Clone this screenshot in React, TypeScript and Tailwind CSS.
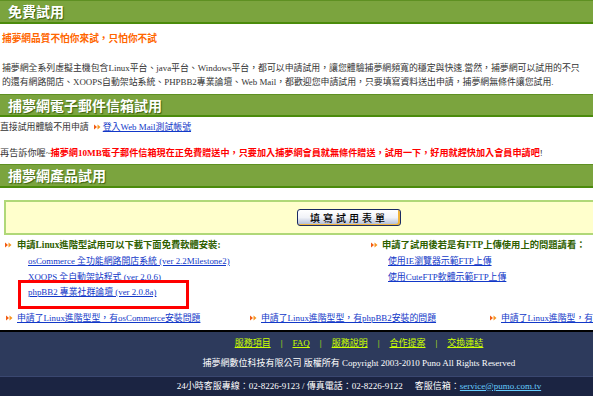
import React from "react";

const Arrow = () => (
  <svg width="7" height="6" viewBox="0 0 7 6" className="shrink-0">
    <polygon points="0,0.5 3,3 0,5.5" fill="#f25c13" />
    <polygon points="3.5,0.5 6.5,3 3.5,5.5" fill="#f7941d" />
  </svg>
);

const Bar = ({ children, h }: { children: React.ReactNode; h: string }) => (
  <div
    className={`${h} flex items-center pl-[8px] bg-[#7ba43e] border-t border-t-[#5e9022] border-b-2 border-b-[#4b8b0c] text-white text-[14px] font-bold font-['Noto_Sans_CJK_TC',sans-serif] [text-shadow:1px_1px_1px_#3b6410] whitespace-nowrap`}
  >
    {children}
  </div>
);

const Link = ({ children }: { children: React.ReactNode }) => (
  <span className="text-[#1238c8] underline">{children}</span>
);

export default function App() {
  return (
    <div className="relative w-[593px] h-[396px] overflow-hidden bg-white font-['Liberation_Serif','Noto_Sans_CJK_TC',serif] text-[#333]">
      <div className="w-[718px]">
        <div className="h-[330px]">
          <Bar h="h-[24px]">免費試用</Bar>
          <p className="mt-[9px] pl-[2px] text-[9.7px] leading-[12px] font-bold text-[#ff6600] whitespace-nowrap">
            捕夢網品質不怕你來試，只怕你不試
          </p>
          <div className="mt-[17px] pl-[2px] text-[8.9px] leading-[13.5px] whitespace-nowrap">
            <div>
              捕夢網全系列虛擬主機包含Linux平台、java平台、Windows平台，都可以申請試用，讓您體驗捕夢網頻寬的穩定與快速.當然，捕夢網可以試用的不只
            </div>
            <div>
              的還有網路開店、XOOPS自動架站系統、PHPBB2專業論壇、Web Mail，都歡迎您申請試用，只要填寫資料送出申請，捕夢網無條件讓您試用.
            </div>
          </div>
          <div className="mt-[5px]">
            <Bar h="h-[23px]">捕夢網電子郵件信箱試用</Bar>
          </div>
          <div className="mt-[4px] flex items-center text-[8.9px] leading-[12px] whitespace-nowrap">
            <span>直接試用體驗不用申請</span>
            <span className="ml-[5px] mr-[2px]">
              <Arrow />
            </span>
            <Link>登入Web Mail測試帳號</Link>
          </div>
          <div className="mt-[14px] text-[9.15px] leading-[12px] whitespace-nowrap">
            <span>再告訴你喔~</span>
            <span className="text-[#ff0000] font-bold">
              捕夢網10MB電子郵件信箱現在正免費贈送中，只要加入捕夢網會員就無條件贈送，試用一下，好用就趕快加入會員申請吧
            </span>
            <span>!</span>
          </div>
          <div className="mt-[5px]">
            <Bar h="h-[24px]">捕夢網產品試用</Bar>
          </div>
          <div className="mt-[12px] ml-[4px] w-[710px] h-[35px] border-2 border-[#b0d878] bg-[#ffffcc] flex items-center pl-[291px]">
            <div className="w-[104px] h-[17px] rounded-[3px] border border-[#1b2b63] bg-gradient-to-b from-white via-[#f1f3f8] to-[#aeb9d3] shadow-[inset_-2px_-1px_0_#f1b43a] flex items-center justify-center text-[10px] tracking-[3px] text-black font-['Noto_Sans_CJK_TC',sans-serif] font-medium">
              填寫試用表單
            </div>
          </div>
          <div className="mt-[4px] flex text-[8.9px]">
            <div className="w-[371px] pl-[5px]">
              <div className="flex items-center gap-[5px] leading-[12px] font-bold text-[#2f5f00] whitespace-nowrap text-[9.3px]">
                <Arrow />
                <span>申請Linux進階型試用可以下載下面免費軟體安裝:</span>
              </div>
              <div className="mt-[3px] pl-[23px] leading-[15.5px] whitespace-nowrap">
                <div>
                  <Link>osCommerce 全功能網路開店系統 (ver 2.2Milestone2)</Link>
                </div>
                <div>
                  <Link>XOOPS 全自動架站程式 (ver 2.0.6)</Link>
                </div>
                <div>
                  <Link>phpBB2 專業社群論壇 (ver 2.0.8a)</Link>
                </div>
              </div>
            </div>
            <div>
              <div className="flex items-center gap-[4px] leading-[12px] font-bold text-[#2f5f00] whitespace-nowrap text-[9.3px]">
                <Arrow />
                <span>申請了試用後若是有FTP上傳使用上的問題請看：</span>
              </div>
              <div className="mt-[3px] pl-[17px] leading-[15.5px] whitespace-nowrap">
                <div>
                  <Link>使用IE瀏覽器示範FTP上傳</Link>
                </div>
                <div>
                  <Link>使用CuteFTP軟體示範FTP上傳</Link>
                </div>
              </div>
            </div>
          </div>
          <div className="mt-[11px] flex text-[8.9px] leading-[13px] whitespace-nowrap">
            <div className="w-[250px] pl-[6px] flex items-center gap-[4px]">
              <Arrow />
              <Link>申請了Linux進階型型，有osCommerce安裝問題</Link>
            </div>
            <div className="w-[240px] flex items-center gap-[4px]">
              <Arrow />
              <Link>申請了Linux進階型型，有phpBB2安裝的問題</Link>
            </div>
            <div className="flex items-center gap-[4px]">
              <Arrow />
              <Link>申請了Linux進階型，有XOOPS安裝的問題</Link>
            </div>
          </div>
        </div>
        <div className="border-t-2 border-black bg-[#2d3a5c] h-[46px] pt-[5px] text-[9px] leading-[12px] whitespace-nowrap">
          <div className="flex justify-center items-center gap-[10px] text-[#ccff00]">
            <span className="underline">服務項目</span>
            <span>|</span>
            <span className="underline">FAQ</span>
            <span>|</span>
            <span className="underline">服務說明</span>
            <span>|</span>
            <span className="underline">合作提案</span>
            <span>|</span>
            <span className="underline">交換連結</span>
          </div>
          <div className="mt-[8px] text-center text-white">
            捕夢網數位科技有限公司 版權所有 Copyright 2003-2010 Puno All Rights Reserved
          </div>
        </div>
        <div className="h-[20px] bg-[#1b2442] border-t border-[#3a4770] flex justify-center items-center text-[9px] text-white whitespace-nowrap">
          <span>24小時客服專線：02-8226-9123 / 傳真電話：02-8226-9122</span>
          <span className="ml-[12px]">客服信箱：</span>
          <span className="text-[#66ccff] underline">service@pumo.com.tv</span>
        </div>
      </div>
      <div className="absolute left-[18px] top-[280px] w-[171px] h-[29px] border-[3px] border-[#ff0000]" />
    </div>
  );
}
